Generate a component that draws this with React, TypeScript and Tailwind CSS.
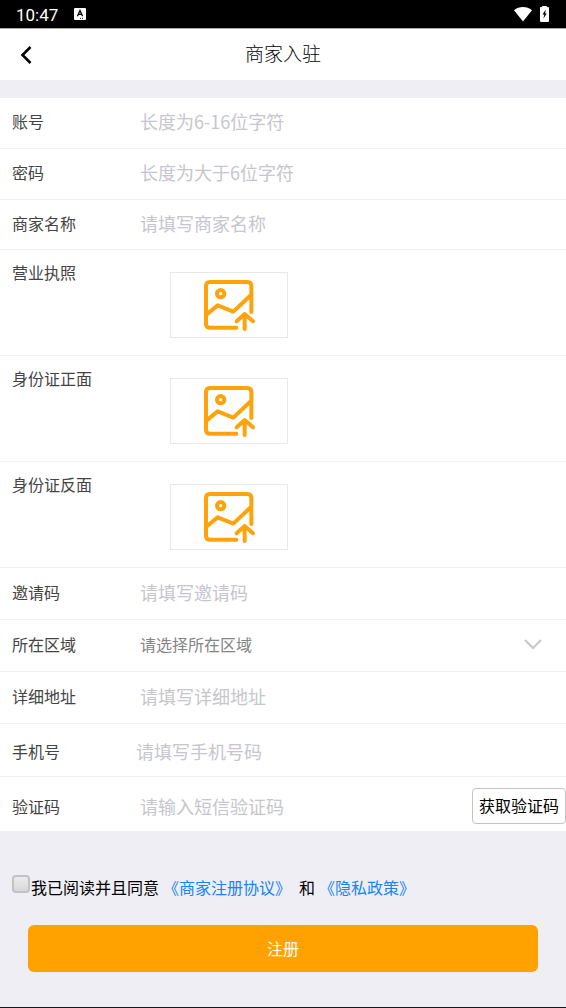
import { useState } from "react";
import type { ReactNode } from "react";

const inputClass =
  "min-w-0 flex-1 bg-transparent text-lg leading-6 text-[#333] outline-none placeholder:text-[#c6c6cc] placeholder:opacity-100";

function StatusBar() {
  return (
    <div className="flex h-7 items-center justify-between bg-black pr-[17px] pl-4 text-white">
      <div className="flex items-center gap-4">
        <span className="pt-0.5 font-[Roboto,sans-serif] text-[17px] leading-5">10:47</span>
        <svg className="h-3 w-3" viewBox="0 0 12 12" aria-hidden="true">
          <rect width="12" height="12" rx="1" fill="#fff" />
          <path d="M3.4 8.2 6 2.6 8.6 8.2M4.4 6.4h3.2" fill="none" stroke="#000" strokeWidth="1.3" />
          <path d="M6 10.4h1M8 10.4h1" stroke="#000" strokeWidth="0.8" />
        </svg>
      </div>
      <div className="flex items-center gap-2">
        <svg className="h-4 w-[18px]" viewBox="0 0 18 16" aria-hidden="true">
          <path d="M0 4.2C5.2-.2 12.8-.2 18 4.2L9 15.500Z" fill="#fff" />
        </svg>
        <svg className="h-4 w-[9px]" viewBox="0 0 9 16" aria-hidden="true">
          <path d="M2.200 0h4.600v1H8a1 1 0 0 1 1 1V15a1 1 0 0 1-1 1H1a1 1 0 0 1-1-1V2a1 1 0 0 1 1-1h1.200Z" fill="#fff" />
          <path d="M5.800 3.500 2.500 8.600h1.800L3.400 12.800 6.700 7.400H5.100Z" fill="#000" />
        </svg>
      </div>
    </div>
  );
}

function UploadIcon() {
  return (
    <svg
      className="h-[51px] w-[51px] overflow-visible"
      viewBox="0 0 153 153"
      fill="none"
      stroke="#fea30c"
      strokeWidth="12"
      strokeLinecap="round"
      strokeLinejoin="round"
      aria-hidden="true"
    >
      <path d="M97 143H18Q6 143 6 131V18Q6 6 18 6H130Q142 6 142 18V96" />
      <circle cx="50" cy="41" r="11" />
      <path d="M8 103 41 76 88 95 141 45" />
      <path d="M122 147V104M98 124 122 102 147 124" />
    </svg>
  );
}

function Row({ id, label, className, children }: { id: string; label: string; className: string; children: ReactNode }) {
  return (
    <div className={`flex items-center border-b border-[#f2f2f4] pl-3 ${className}`}>
      <label htmlFor={id} className="w-32 shrink-0 text-base leading-6 text-[#444]">
        {label}
      </label>
      {children}
    </div>
  );
}

function UploadRow({ id, label }: { id: string; label: string }) {
  return (
    <div className="flex items-start border-b border-[#f2f2f4] pl-3">
      <span className="w-[158px] shrink-0 pt-2.5 text-base leading-6 text-[#444]">{label}</span>
      <label
        htmlFor={id}
        className="mt-[22px] mb-[17px] flex h-[66px] w-[118px] cursor-pointer items-center justify-center border border-[#e8e8ea]"
      >
        <UploadIcon />
        <input id={id} type="file" accept="image/*" aria-label={label} className="sr-only" />
      </label>
    </div>
  );
}

export default function App() {
  const [agreed, setAgreed] = useState(false);

  return (
    <div className="flex min-h-screen flex-col border-b border-[#15151c] bg-[#efeef4] font-['Noto_Sans_CJK_SC',sans-serif]">
      <StatusBar />

      {/* Header */}
      <header className="grid h-[52px] grid-cols-[60px_1fr_60px] items-center border-t border-[#aaa] bg-white">
        <button type="button" aria-label="返回" className="flex h-full items-center pl-5">
          <svg className="h-5 w-3" viewBox="0 0 12 20" fill="none" stroke="#000" strokeWidth="2.600" aria-hidden="true">
            <path d="M10.500 2 2.500 10l8 8" />
          </svg>
        </button>
        <h1 className="pb-1 text-center text-[19px] leading-7 font-light text-black">商家入驻</h1>
      </header>

      <form className="mt-[18px]" onSubmit={(e) => e.preventDefault()}>
        <div className="bg-white">
          <Row id="account" label="账号" className="h-[51px] pb-1">
            <input id="account" type="text" placeholder="长度为6-16位字符" className={inputClass} />
          </Row>
          <Row id="password" label="密码" className="h-[51px] pb-1">
            <input id="password" type="password" placeholder="长度为大于6位字符" className={inputClass} />
          </Row>
          <Row id="shop" label="商家名称" className="h-[50px] pb-1">
            <input id="shop" type="text" placeholder="请填写商家名称" className={inputClass} />
          </Row>

          {/* Documents */}
          <UploadRow id="license" label="营业执照" />
          <UploadRow id="id-front" label="身份证正面" />
          <UploadRow id="id-back" label="身份证反面" />

          <Row id="invite" label="邀请码" className="h-[52px] pb-1">
            <input id="invite" type="text" placeholder="请填写邀请码" className={inputClass} />
          </Row>
          <Row id="region" label="所在区域" className="h-[52px] pb-1">
            <div className="relative flex min-w-0 flex-1 items-center">
              <select id="region" className="w-full appearance-none bg-transparent pr-12 text-base leading-6 text-[#858585] outline-none">
                <option>请选择所在区域</option>
              </select>
              <svg
                className="pointer-events-none absolute right-6 h-3 w-[18px]"
                viewBox="0 0 18 12"
                fill="none"
                stroke="#c8c8cc"
                strokeWidth="2"
                aria-hidden="true"
              >
                <path d="M1 2l8 8 8-8" />
              </svg>
            </div>
          </Row>
          <Row id="address" label="详细地址" className="h-[52px] pb-1">
            <input id="address" type="text" placeholder="请填写详细地址" className={inputClass} />
          </Row>
          <div className="flex h-[53px] items-center border-b border-[#f2f2f4] pt-0.5 pl-3">
            <label htmlFor="phone" className="w-[124px] shrink-0 text-base leading-6 text-[#444]">
              手机号
            </label>
            <input id="phone" type="tel" placeholder="请填写手机号码" className={inputClass} />
          </div>
          <Row id="code" label="验证码" className="h-[55px] pt-1">
            <input id="code" type="text" placeholder="请输入短信验证码" className={inputClass} />
            <button
              type="button"
              className="h-9 w-[94px] shrink-0 rounded-sm border border-[#c4c4c4] bg-white pb-0.5 text-base leading-6 whitespace-nowrap text-black"
            >
              获取验证码
            </button>
          </Row>
        </div>

        {/* Agreement */}
        <div className="mt-[43px] flex items-center pl-3 text-base leading-6 text-black">
          <input
            id="agree"
            type="checkbox"
            checked={agreed}
            onChange={(e) => setAgreed(e.target.checked)}
            className="mr-px mb-1.5 h-[18px] w-[18px] appearance-none rounded-sm border-2 border-[#c2c2c4] bg-gradient-to-b from-[#ececec] to-[#d8d8d8] checked:from-[#ffa200] checked:to-[#ffa200]"
          />
          <label htmlFor="agree">我已阅读并且同意</label>
          <a href="#agreement" className="mr-2 ml-1 text-[#1485fb]">《商家注册协议》</a>
          和
          <a href="#privacy" className="ml-1 text-[#1485fb]">《隐私政策》</a>
        </div>

        <div className="px-7 pt-[26px]">
          <button type="submit" className="h-[47px] w-full rounded-md bg-[#ffa200] pb-0.5 text-base leading-6 text-white">
            注册
          </button>
        </div>
      </form>
    </div>
  );
}
